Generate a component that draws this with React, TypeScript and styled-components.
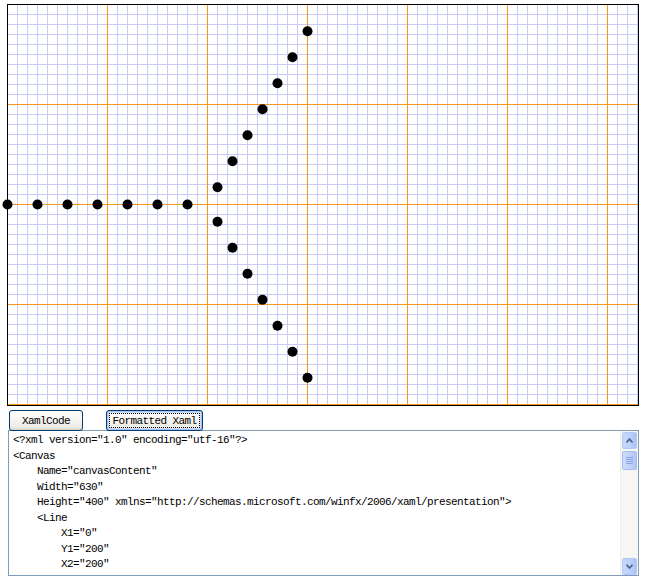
import React from "react";
import styled, { createGlobalStyle } from "styled-components";

const Global = createGlobalStyle`
  body {
    margin: 0;
    background: #fff;
    font-family: "Liberation Mono", "DejaVu Sans Mono", monospace;
  }
`;

const Page = styled.div`
  padding: 4px 0 0 7px;
  width: 632px;
`;

const Frame = styled.div`
  width: 630px;
  height: 400px;
  border: 1px solid #000;
  position: relative;
  overflow: visible;
`;

const Board = styled.svg`
  display: block;
  overflow: visible;
`;

const Toolbar = styled.div`
  display: flex;
  gap: 23px;
  margin: 4px 0 0 2px;
`;

const Button = styled.button<{ $focused?: boolean }>`
  position: relative;
  height: 21px;
  width: ${(p) => p.$width}px;
  padding: 0;
  border: 1px solid #003c74;
  border-radius: 3px;
  background: linear-gradient(180deg, #ffffff 0%, #f6f5f0 45%, #ecebe4 85%, #d8d5c8 100%);
  box-shadow: ${(p) =>
    p.$focused ? "inset 0 0 0 1px #a9c4f2, inset 0 0 0 2px #cadcf8" : "none"};
  font-family: "Liberation Mono", "DejaVu Sans Mono", monospace;
  font-size: 11px;
  letter-spacing: -0.6px;
  color: #000;
  cursor: pointer;

  &::after {
    content: "";
    display: ${(p) => (p.$focused ? "block" : "none")};
    position: absolute;
    inset: 2px;
    border: 1px dotted #000;
  }
`;

const CodeBox = styled.div`
  display: flex;
  width: 629px;
  height: 144px;
  margin: -1px 0 0 1px;
  border: 1px solid #7f9db9;
  background: #fff;
  overflow: hidden;
`;

const Code = styled.pre`
  flex: 1;
  margin: 0;
  padding: 2px 0 0 4px;
  font-family: "Liberation Mono", "DejaVu Sans Mono", monospace;
  font-size: 11px;
  letter-spacing: -0.6px;
  line-height: 15.5px;
  color: #000;
  overflow: hidden;
`;

const ScrollBar = styled.div`
  width: 17px;
  display: flex;
  flex-direction: column;
  background: #f7f6f2;
  border-left: 1px solid #efeee8;
  padding-top: 1px;
`;

const ArrowButton = styled.div`
  height: 15px;
  margin: 0 1px;
  border: 1px solid #b4c8f6;
  border-radius: 2px;
  background: linear-gradient(90deg, #c8d8fc 0%, #bccffb 60%, #aac0f4 100%);
  display: flex;
  align-items: center;
  justify-content: center;
`;

const Thumb = styled.div`
  height: 17px;
  margin: 2px 1px 0;
  border: 1px solid #a5bdf2;
  border-radius: 2px;
  background: linear-gradient(90deg, #cddcfd 0%, #bdd0fb 60%, #b0c6f6 100%);
  display: flex;
  flex-direction: column;
  align-items: center;
  justify-content: center;
  gap: 1px;
`;

const Grip = styled.span`
  width: 7px;
  height: 1px;
  background: #8aa6e6;
`;

const Track = styled.div`
  flex: 1;
`;

const W = 630;
const H = 400;

const xs = Array.from({ length: W / 10 + 1 }, (_, i) => i * 10);
const ys = Array.from({ length: H / 10 + 1 }, (_, i) => i * 10);

const s = Math.sqrt(3) / 2;
const dots: [number, number][] = [
  ...Array.from({ length: 7 }, (_, i) => [i * 30, 200] as [number, number]),
  ...Array.from({ length: 7 }, (_, i) => {
    const d = 20 + i * 30;
    return [200 + d / 2, 200 - d * s] as [number, number];
  }),
  ...Array.from({ length: 7 }, (_, i) => {
    const d = 20 + i * 30;
    return [200 + d / 2, 200 + d * s] as [number, number];
  }),
];

const code = `<?xml version="1.0" encoding="utf-16"?>
<Canvas
    Name="canvasContent"
    Width="630"
    Height="400" xmlns="http://schemas.microsoft.com/winfx/2006/xaml/presentation">
    <Line
        X1="0"
        Y1="200"
        X2="200"
        Y2="200"
        Stroke="#FFFFA500"
        StrokeThickness="1" />`;

function Arrow({ up }: { up?: boolean }) {
  return (
    <svg width="7" height="5" viewBox="0 0 7 5">
      <path
        d={up ? "M0.5 4.5 L3.5 1.2 L6.5 4.5" : "M0.5 0.8 L3.5 4 L6.5 0.8"}
        fill="none"
        stroke="#4d6185"
        strokeWidth="1.6"
      />
    </svg>
  );
}

export default function App() {
  return (
    <Page>
      <Global />
      <Frame>
        <Board width={W} height={H}>
          <g transform="translate(-0.5,-0.5)" shapeRendering="crispEdges">
            {xs
              .filter((x) => x % 100 !== 0)
              .map((x) => (
                <line key={"v" + x} x1={x} y1={0} x2={x} y2={H} stroke="#cbcbf7" strokeWidth={1} />
              ))}
            {ys
              .filter((y) => y % 100 !== 0)
              .map((y) => (
                <line key={"h" + y} x1={0} y1={y} x2={W} y2={y} stroke="#cbcbf7" strokeWidth={1} />
              ))}
            {xs
              .filter((x) => x % 100 === 0 && x > 0)
              .map((x) => (
                <line key={"V" + x} x1={x} y1={0} x2={x} y2={H} stroke="#f39a1e" strokeWidth={1} />
              ))}
            {ys
              .filter((y) => y % 100 === 0 && y > 0)
              .map((y) => (
                <line key={"H" + y} x1={0} y1={y} x2={W} y2={y} stroke="#f39a1e" strokeWidth={1} />
              ))}
          </g>
          <g transform="translate(-0.5,-0.5)">
            {dots.map(([x, y], i) => (
              <circle key={i} cx={x} cy={y} r={5} fill="#000" />
            ))}
          </g>
        </Board>
      </Frame>
      <Toolbar>
        <Button $width={74}>XamlCode</Button>
        <Button $width={97} $focused>
          Formatted Xaml
        </Button>
      </Toolbar>
      <CodeBox>
        <Code>{code}</Code>
        <ScrollBar>
          <ArrowButton>
            <Arrow up />
          </ArrowButton>
          <Thumb>
            <Grip />
            <Grip />
            <Grip />
            <Grip />
          </Thumb>
          <Track />
          <ArrowButton>
            <Arrow />
          </ArrowButton>
        </ScrollBar>
      </CodeBox>
    </Page>
  );
}
